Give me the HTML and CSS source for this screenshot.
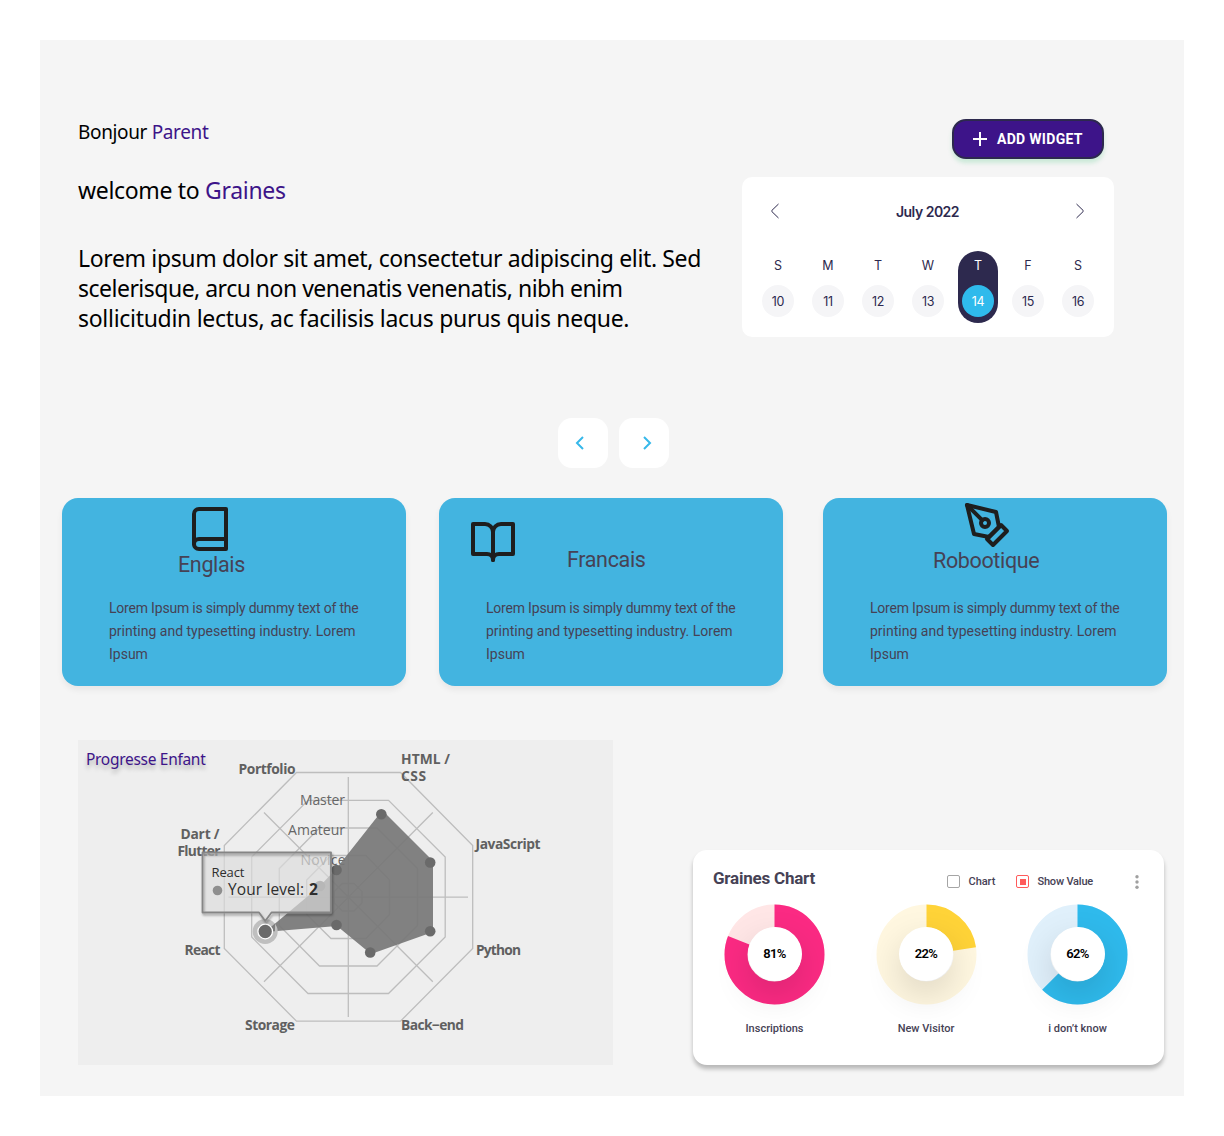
FILE: index.html
```html
<!DOCTYPE html>
<html lang="fr">
<head>
<meta charset="utf-8">
<title>Graines</title>
<link rel="stylesheet" href="styles.css">
</head>
<body>
<main class="dashboard">
  <section class="intro">
    <div class="welcome">
      <p class="hello">Bonjour <span class="accent">Parent</span></p>
      <h1 class="title">welcome to <span class="accent">Graines</span></h1>
      <p class="lead">
        <span class="line line-a">Lorem ipsum dolor sit amet, consectetur adipiscing elit. Sed</span>
        <span class="line line-b">scelerisque, arcu non venenatis venenatis, nibh enim</span>
        <span class="line line-c">sollicitudin lectus, ac facilisis lacus purus quis neque.</span>
      </p>
    </div>
    <aside class="side">
      <button class="add-widget">
        <svg width="14" height="14" viewBox="0 0 14 14"><path d="M7 0v14M0 7h14" stroke="#fff" stroke-width="2"/></svg>
        <span>ADD WIDGET</span>
      </button>
      <div class="calendar">
        <div class="month">
          <svg width="10" height="16" viewBox="0 0 10 16"><path d="M8.500 1 1.900 7.400Q1.200 8 1.900 8.600L8.500 15"/></svg>
          <span>July 2022</span>
          <svg width="10" height="16" viewBox="0 0 10 16"><path d="M1.500 1 8.100 7.400Q8.800 8 8.100 8.600L1.500 15"/></svg>
        </div>
        <div class="week">
          <div class="day"><span>S</span><b>10</b></div>
          <div class="day"><span>M</span><b>11</b></div>
          <div class="day"><span>T</span><b>12</b></div>
          <div class="day"><span>W</span><b>13</b></div>
          <div class="day selected"><span>T</span><b>14</b></div>
          <div class="day"><span>F</span><b>15</b></div>
          <div class="day"><span>S</span><b>16</b></div>
        </div>
      </div>
    </aside>
  </section>

  <nav class="pager">
    <button class="page"><svg class="prev" width="10" height="14" viewBox="0 0 10 14"><path d="M8 1 2 7l6 6"/></svg></button>
    <button class="page"><svg class="next" width="10" height="14" viewBox="0 0 10 14"><path d="m2 1 6 6-6 6"/></svg></button>
  </nav>

  <section class="courses">
    <article class="course english">
      <header>
        <svg class="icon" viewBox="0 0 24 24"><path d="M4 19.500A2.500 2.500 0 0 1 6.500 17H20"/><path d="M6.500 2H20v20H6.500A2.500 2.500 0 0 1 4 19.500v-15A2.500 2.500 0 0 1 6.500 2z"/></svg>
        <h2>Englais</h2>
      </header>
      <p><span class="tight">Lorem Ipsum is simply dummy text of the</span><br>printing and typesetting industry. Lorem<br>Ipsum</p>
    </article>
    <article class="course french">
      <header>
        <svg class="icon" viewBox="0 0 24 24"><path d="M2 3h6a4 4 0 0 1 4 4v14a3 3 0 0 0-3-3H2z"/><path d="M22 3h-6a4 4 0 0 0-4 4v14a3 3 0 0 1 3-3h7z"/></svg>
        <h2>Francais</h2>
      </header>
      <p><span class="tight">Lorem Ipsum is simply dummy text of the</span><br>printing and typesetting industry. Lorem<br>Ipsum</p>
    </article>
    <article class="course robotics">
      <header>
        <svg class="icon" viewBox="0 0 24 24"><path d="m12 19 7-7 3 3-7 7z"/><path d="m18 13-1.500-7.500L2 2l3.500 14.500L13 18z"/><path d="m2 2 7.586 7.586"/><circle cx="11" cy="11" r="2"/></svg>
        <h2>Robootique</h2>
      </header>
      <p><span class="tight">Lorem Ipsum is simply dummy text of the</span><br>printing and typesetting industry. Lorem<br>Ipsum</p>
    </article>
  </section>

  <section class="stats">
    <div class="progress">
      <h3>Progresse Enfant</h3>
      <svg class="radar" width="535" height="325" viewBox="78 740 535 325">
        <defs>
          <filter id="soft" x="-20%" y="-20%" width="140%" height="150%"><feDropShadow dx="1" dy="2" stdDeviation="1.2" flood-color="#000" flood-opacity=".35"/></filter>
        </defs>
        <g class="grid">
          <path d="M296.500 772.500H400.500L472.700 845.500V948.500L400.500 1021.200H296.500L224.300 948.500V845.500Z"/>
          <path d="M308 800.300H388.500L445.200 857V937L388.500 993.500H308L251.700 937V857Z"/>
          <path d="M319.500 828H377L417.500 868.500V925.500L377 966H319.500L279.300 925.500V868.500Z"/>
          <path d="M331 855.500H366L389.500 880V914.500L366 938.500H331L306.700 914.500V880Z"/>
          <path d="M342.300 883.500H354L362 891.500V903L354 911H342.300L334.300 903V891.500Z"/>
          <path d="M348.300 777V1017M228.500 897.200H468M264 812.500 432.800 981.800M432.800 812.500 264 981.800"/>
        </g>
        <g class="levels">
          <text x="300" y="805" textLength="45">Master</text>
          <text x="288" y="835" textLength="57">Amateur</text>
          <text x="300.500" y="865" textLength="45">Novice</text>
        </g>
        <path class="area" d="M381 812 386 814 433 861V932L371 954 337 926 265 932 320 886 336 869Z"/>
        <g class="dots">
          <circle cx="381.300" cy="814.200" r="5.300"/><circle cx="430.200" cy="862.500" r="5.300"/>
          <circle cx="430.200" cy="931.300" r="5.300"/><circle cx="370.200" cy="952.500" r="5.300"/>
          <circle cx="336.500" cy="925" r="5.300"/><circle cx="320" cy="886" r="5.300"/>
          <circle cx="336.500" cy="870" r="5.300"/>
        </g>
        <g class="skills">
          <text x="238.500" y="774" textLength="57">Portfolio</text>
          <text x="401" y="764" textLength="49">HTML /</text>
          <text x="401" y="781" textLength="25">CSS</text>
          <text x="180.500" y="839" textLength="39">Dart /</text>
          <text x="177.500" y="856" textLength="43">Flutter</text>
          <text x="475.500" y="849" textLength="65">JavaScript</text>
          <text x="184.500" y="955" textLength="36">React</text>
          <text x="476" y="955" textLength="45">Python</text>
          <text x="245" y="1030" textLength="50">Storage</text>
          <text x="401" y="1030" textLength="63">Back−end</text>
        </g>
        <circle cx="265.200" cy="931.500" r="12.500" fill="#bfbfbf"/>
        <path class="area" d="M265 932 275 923.500 275 931.200Z"/>
        <circle cx="265.200" cy="931.500" r="7.300" fill="#6a6a6a" stroke="#fff" stroke-width="1.300"/>
        <path class="bubble" d="M202.500 852.500H331V912.500H271.500L265.200 921 259 912.500H202.500Z"/>
        <path class="bubble-edge" filter="url(#soft)" d="M202.500 852.500H331V912.500H271.500L265.200 921 259 912.500H202.500Z"/>
        <circle cx="217.500" cy="890.500" r="4.800" fill="#8e8e8e"/>
        <g class="tip">
          <text class="tip-name" x="211.500" y="877" textLength="33">React</text>
          <text x="228" y="895" textLength="76">Your level:</text>
          <text class="tip-value" x="309" y="895" textLength="9.500">2</text>
        </g>
      </svg>
    </div>

    <div class="chart-card">
      <header class="chart-head">
        <h3>Graines Chart</h3>
        <label class="check"><i class="box"></i><span>Chart</span></label>
        <label class="check on"><i class="box"></i><span>Show Value</span></label>
        <svg class="more" width="4" height="14" viewBox="0 0 4 14"><circle cx="2" cy="1.800" r="1.700"/><circle cx="2" cy="7" r="1.700"/><circle cx="2" cy="12.200" r="1.700"/></svg>
      </header>
      <div class="donuts">
        <figure class="donut pink">
          <svg width="101" height="101" viewBox="0 0 101 101"><circle class="track" cx="50.500" cy="50.500" r="38.500"/><circle class="value" cx="50.500" cy="50.500" r="38.500" pathLength="100" stroke-dasharray="81 100"/></svg>
          <strong>81%</strong>
          <figcaption>Inscriptions</figcaption>
        </figure>
        <figure class="donut yellow">
          <svg width="101" height="101" viewBox="0 0 101 101"><circle class="track" cx="50.500" cy="50.500" r="38.500"/><circle class="value" cx="50.500" cy="50.500" r="38.500" pathLength="100" stroke-dasharray="22.700 100"/></svg>
          <strong>22%</strong>
          <figcaption>New Visitor</figcaption>
        </figure>
        <figure class="donut blue">
          <svg width="101" height="101" viewBox="0 0 101 101"><circle class="track" cx="50.500" cy="50.500" r="38.500"/><circle class="value" cx="50.500" cy="50.500" r="38.500" pathLength="100" stroke-dasharray="62.500 100"/></svg>
          <strong>62%</strong>
          <figcaption>i don’t know</figcaption>
        </figure>
      </div>
    </div>
  </section>
</main>
</body>
</html>
```
FILE: styles.css
```css
* { box-sizing: border-box; }
body { margin: 0; padding: 40px; background: #fff; font-family: Roboto, "Liberation Sans", sans-serif; }
h1, h2, h3, p, figure { margin: 0; font-weight: 400; }
button { padding: 0; border: 0; font: inherit; }

.dashboard { height: 1056px; padding-top: 76px; background: #f5f5f5; }
.accent { color: #3d1489; }

/* Greeting and calendar */
.intro { display: flex; height: 302px; padding: 0 70px 0 38px; justify-content: space-between; }
.welcome { padding-top: 1px; font-family: "Noto Sans", "Open Sans", sans-serif; line-height: 30px; color: #000; }
.hello { font-size: 19px; letter-spacing: -.36px; }
.title { margin-top: 28px; font-size: 23px; letter-spacing: -.32px; }
.lead { margin-top: 38px; font-size: 23px; }
.line { display: block; white-space: nowrap; }
.line-a { letter-spacing: -.36px; }
.line-b { letter-spacing: -.51px; }
.line-c { letter-spacing: -.29px; }

.side { display: flex; flex-direction: column; align-items: flex-end; width: 372px; padding-top: 3px; }
.add-widget {
  display: flex; align-items: center; gap: 10px;
  width: 152px; height: 40px; margin-right: 10px; padding-left: 19px;
  border: 2px solid #2d294e; border-radius: 14px;
  background: #3d1489; color: #fff;
  box-shadow: 0 4px 4px rgba(80, 200, 130, .25);
  font-size: 14px; font-weight: 700; letter-spacing: .3px;
}
.calendar { width: 372px; height: 160px; margin-top: 18px; padding-top: 24px; border-radius: 10px; background: #fff; color: #2d294e; }
.month { display: flex; align-items: center; justify-content: space-between; height: 22px; padding: 0 29px 0 28px; font: 600 14px/22px Inter, sans-serif; letter-spacing: -.5px; }
.month svg { margin-top: -2px; fill: none; stroke: #2d294e; stroke-width: 1; }
.week { display: grid; grid-template-columns: repeat(7, 50px); margin-top: 28px; padding-left: 11px; font: 400 12.500px/16px Inter, sans-serif; }
.day { display: flex; flex-direction: column; align-items: center; justify-self: center; gap: 11px; width: 40px; height: 72px; padding-top: 7px; border-radius: 20px; }
.day b { width: 32px; height: 32px; border-radius: 50%; background: #f5f5f7; font-weight: 400; line-height: 33px; letter-spacing: -.3px; text-align: center; }
.selected { background: #2d294e; color: #fff; }
.selected b { background: #2fbaec; }

/* Pager */
.pager { display: flex; gap: 11px; padding-left: 518px; }
.page { width: 50px; height: 50px; border-radius: 14px; background: #fff; }
.page svg { display: block; margin: 0 auto; fill: none; stroke: #36b8ea; stroke-width: 2; }
.page .prev { margin-left: 17px; }
.page .next { margin-left: 23px; }

/* Courses */
.courses { display: flex; margin-top: 30px; padding-left: 22px; }
.course { width: 344px; height: 188px; border-radius: 16px; background: #43b4e0; box-shadow: 0 4px 6px rgba(0, 0, 0, .06); color: #464255; }
.french { margin-left: 33px; }
.robotics { margin-left: 40px; }
.course header { height: 99px; }
.icon { display: block; width: 48px; height: 48px; fill: none; stroke: #1e1e1e; stroke-width: 2; stroke-linecap: round; stroke-linejoin: round; }
.course h2 { font-size: 21.500px; line-height: 26px; letter-spacing: -.35px; }
.course p { padding-left: 47px; font-size: 14px; line-height: 23px; white-space: nowrap; }
.tight { letter-spacing: -.2px; }
.english header { padding: 7px 0 0 116px; }
.english .icon { margin-left: 8px; }
.english h2 { margin-top: -1px; }
.french header { display: flex; padding: 20px 0 0 30px; }
.french h2 { margin: 29px 0 0 50px; }
.robotics header { padding: 3px 0 0 110px; }
.robotics .icon { margin-left: 30px; }
.robotics h2 { margin-top: -1px; }

/* Progress radar */
.stats { display: flex; margin-top: 54px; padding-left: 38px; }
.progress { display: grid; width: 535px; height: 325px; background: #eee; }
.progress > * { grid-area: 1 / 1; }
.progress h3 { padding: 7px 0 0 8px; color: #3d1489; font: 400 15.500px/24px "Noto Sans", sans-serif; letter-spacing: -.3px; text-shadow: 0 4px 4px rgba(0, 0, 0, .25); }
.radar { display: block; font-family: "Open Sans", "Noto Sans", sans-serif; }
.grid { fill: none; stroke: #bdbdbd; stroke-width: 1.300; }
.levels { fill: #666; font-size: 14px; }
.area { fill: #777; fill-opacity: .92; }
.dots { fill: #6a6a6a; }
.skills { fill: #606060; font-size: 13.800px; font-weight: 700; }
.bubble { fill: #dcdcdc; fill-opacity: .68; }
.bubble-edge { fill: none; stroke: #858585; stroke-width: 1.800; stroke-linejoin: round; }
.tip { fill: #2e2e2e; font-size: 15.500px; }
.tip-name { font-size: 13px; }
.tip-value { font-weight: 700; }

/* Donut card */
.chart-card { width: 471px; height: 214.500px; margin: 110px 0 0 80px; padding-top: 15px; border-radius: 14px; background: #fff; box-shadow: 0 4px 4px rgba(0, 0, 0, .25); color: #464255; }
.chart-head { display: flex; align-items: center; height: 25px; padding: 0 25px 0 20px; }
.chart-head h3 { width: 233.500px; font-size: 17px; font-weight: 700; line-height: 24px; letter-spacing: -.22px; }
.check { display: flex; align-items: center; gap: 8.500px; width: 69px; padding-top: 8px; font-size: 11px; font-weight: 500; line-height: 16px; letter-spacing: -.05px; white-space: nowrap; }
.check span { flex: none; }
.check.on { width: 90px; letter-spacing: -.2px; }
.box { flex: none; width: 13.500px; height: 13.500px; border: 1px solid #a5a5a5; border-radius: 2px; }
.on .box { border-color: #ff5b5b; padding: 2.500px; background: #ff5b5b content-box; }
.more { margin: 8px 0 0 auto; fill: #a0a0a0; }
.donuts { display: flex; gap: 50.500px; padding: 13.500px 0 0 31px; }
.donut { display: grid; justify-items: center; width: 101px; }
.donut svg, .donut strong { grid-area: 1 / 1; }
.donut svg { transform: rotate(-90deg); fill: none; stroke-width: 23px; }
.donut strong { z-index: 1; align-self: center; width: 54px; height: 54px; border-radius: 50%; background: #fff; box-shadow: 0 14px 36px rgba(0, 0, 0, .14); color: #000; font-size: 13px; line-height: 54px; font-weight: 600; letter-spacing: -.6px; text-align: center; }
.donut figcaption { margin-top: 15px; font-size: 11px; font-weight: 500; line-height: 17px; white-space: nowrap; }
.pink .track { stroke: #ffe6e6; }
.pink .value { stroke: #fb2a83; }
.yellow .track { stroke: #fff7e0; }
.yellow .value { stroke: #ffd338; }
.blue .track { stroke: #e0f0fb; }
.blue .value { stroke: #2fbaec; }
```
